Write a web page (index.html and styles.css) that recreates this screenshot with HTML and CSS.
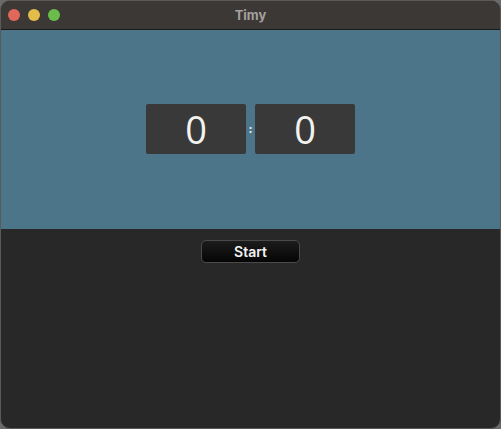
FILE: index.html
```html
<!DOCTYPE html>
<html>
<head>
<meta charset="utf-8">
<link rel="stylesheet" href="styles.css">
</head>
<body>
<div class="window">
  <div class="titlebar">
    <div class="lights">
      <span class="light red"></span>
      <span class="light yellow"></span>
      <span class="light green"></span>
    </div>
    <div class="title">Timy</div>
  </div>
  <div class="display">
    <div class="clock">
      <div class="digit">0</div>
      <div class="colon">:</div>
      <div class="digit">0</div>
    </div>
  </div>
  <div class="controls">
    <button class="start">Start</button>
  </div>
</div>
</body>
</html>
```
FILE: styles.css
```css
html, body {
  margin: 0;
  padding: 0;
  width: 501px;
  height: 429px;
  background: #6a6a6a;
  overflow: hidden;
}
.window {
  box-sizing: border-box;
  width: 501px;
  height: 429px;
  border-radius: 10px;
  border: 1px solid #5c5a58;
  overflow: hidden;
  display: flex;
  flex-direction: column;
  background: #282828;
  font-family: "Inter", "Liberation Sans", sans-serif;
}
.titlebar {
  height: 28px;
  background: #3c3836;
  border-bottom: 1px solid #1c1a19;
  display: flex;
  align-items: center;
  position: relative;
  flex: none;
}
.lights {
  display: flex;
  gap: 8px;
  padding-left: 7px;
}
.light {
  width: 12px;
  height: 12px;
  border-radius: 50%;
  display: block;
}
.red { background: #e0685a; }
.yellow { background: #e3bd4a; }
.green { background: #6bbd4b; }
.title {
  position: absolute;
  left: 0;
  right: 0;
  top: 0;
  bottom: 0;
  display: flex;
  align-items: center;
  justify-content: center;
  color: #a5a19e;
  font-weight: 700;
  font-size: 13px;
}
.display {
  height: 199px;
  background: #4d7589;
  display: flex;
  align-items: center;
  justify-content: center;
  flex: none;
}
.clock {
  display: flex;
  align-items: center;
  gap: 2px;
  margin-top: -2px;
}
.digit {
  width: 100px;
  height: 50px;
  background: #393939;
  border-radius: 2px;
  display: flex;
  align-items: center;
  justify-content: center;
  color: #f2f2ee;
  font-family: "Open Sans", "Liberation Sans", sans-serif;
  font-size: 38px;
  line-height: 1;
}
.colon {
  color: #f0f0f0;
  font-size: 12px;
  font-weight: 700;
  width: 5px;
  text-align: center;
}
.controls {
  flex: 1;
  display: flex;
  justify-content: center;
  padding-top: 11px;
}
.start {
  width: 99px;
  height: 23px;
  border-radius: 5px;
  border: 1px solid #4a4a4a;
  background: linear-gradient(#1c1c1c, #050505);
  color: #f4f4f4;
  font-family: "Inter", "Liberation Sans", sans-serif;
  font-size: 14px;
  font-weight: 600;
  padding: 0;
}
```
